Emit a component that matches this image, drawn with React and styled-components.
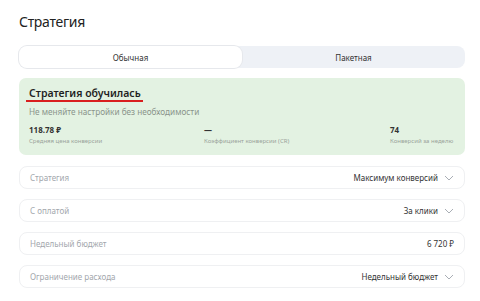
import React from 'react'
import styled, { createGlobalStyle } from 'styled-components'

const GlobalStyle = createGlobalStyle`
  body {
    margin: 0;
    background: #ffffff;
    font-family: "Noto Sans", "Open Sans", sans-serif;
    color: #222;
  }
`

const stats = [
  { value: '118.78 ₽', label: 'Средняя цена конверсии' },
  { value: '—', label: 'Коэффициент конверсии (CR)' },
  { value: '74', label: 'Конверсий за неделю' },
]

const rows = [
  { label: 'Стратегия', value: 'Максимум конверсий', select: true },
  { label: 'С оплатой', value: 'За клики', select: true },
  { label: 'Недельный бюджет', value: '6 720 ₽', select: false },
  { label: 'Ограничение расхода', value: 'Недельный бюджет', select: true },
]

function Chevron() {
  return (
    <svg width="10" height="6" viewBox="0 0 10 6">
      <path d="M1 1l4 4 4-4" fill="none" stroke="#a9aeb5" strokeWidth="1" />
    </svg>
  )
}

function App() {
  return (
    <Page>
      <GlobalStyle />
      <Title>Стратегия</Title>
      <Tabs>
        <Tab active>Обычная</Tab>
        <Tab>Пакетная</Tab>
      </Tabs>
      <Notice>
        <NoticeTitle>Стратегия обучилась</NoticeTitle>
        <NoticeText>Не меняйте настройки без необходимости</NoticeText>
        <Stats>
          {stats.map((s) => (
            <Stat key={s.label}>
              <StatValue>{s.value}</StatValue>
              <StatLabel>{s.label}</StatLabel>
            </Stat>
          ))}
        </Stats>
      </Notice>
      <Rows>
        {rows.map((r) => (
          <Row key={r.label}>
            <RowLabel>{r.label}</RowLabel>
            <RowValue>
              {r.value}
              {r.select && <Chevron />}
            </RowValue>
          </Row>
        ))}
      </Rows>
    </Page>
  )
}

export default App

const Page = styled.div`
  width: 446px;
  padding: 13px 15px 0 19px;
`

const Title = styled.h1`
  margin: 0 0 15px;
  font-size: 14px;
  font-weight: 400;
  line-height: 18px;
  letter-spacing: -0.3px;
  color: #222;
`

const Tabs = styled.div`
  display: grid;
  grid-template-columns: 1fr 1fr;
  height: 22px;
  background: #eef1f6;
  border-radius: 8px;
`

const Tab = styled.div`
  display: flex;
  align-items: center;
  justify-content: center;
  font-size: 8px;
  color: #333;
  border-radius: 8px;
  background: ${({ active }) => (active ? '#ffffff' : 'transparent')};
  box-shadow: ${({ active }) => (active ? '0 0 0 1px #e6e8ec' : 'none')};
`

const Notice = styled.div`
  display: flex;
  flex-direction: column;
  align-items: flex-start;
  margin-top: 10px;
  height: 77px;
  box-sizing: border-box;
  padding: 9px 10px 0 10px;
  background: #e3f2e2;
  border-radius: 7px;
`

const NoticeTitle = styled.div`
  font-size: 10.5px;
  font-weight: 600;
  line-height: 13px;
  color: #1f1f1f;
  padding: 0 2px 0 3px;
  margin-left: -3px;
  border-bottom: 2px solid #d91f1f;
`

const NoticeText = styled.div`
  margin-top: 5px;
  font-size: 8.2px;
  line-height: 10px;
  color: #8a948b;
`

const Stats = styled.div`
  align-self: stretch;
  display: grid;
  grid-template-columns: 175px 186px 1fr;
  margin-top: 8px;
`

const Stat = styled.div`
  display: flex;
  flex-direction: column;
  gap: 2px;
`

const StatValue = styled.div`
  font-size: 8px;
  font-weight: 700;
  line-height: 10px;
  color: #333;
`

const StatLabel = styled.div`
  font-size: 6px;
  line-height: 8px;
  color: #9aa39b;
`

const Rows = styled.div`
  display: flex;
  flex-direction: column;
  gap: 10px;
  margin-top: 11px;
`

const Row = styled.div`
  display: flex;
  align-items: center;
  justify-content: space-between;
  height: 21px;
  padding: 0 10px;
  border: 1px solid #eff0f2;
  border-radius: 8px;
`

const RowLabel = styled.span`
  font-size: 8px;
  color: #a3a7ad;
`

const RowValue = styled.span`
  display: flex;
  align-items: center;
  gap: 6px;
  font-size: 8px;
  color: #333;
`
